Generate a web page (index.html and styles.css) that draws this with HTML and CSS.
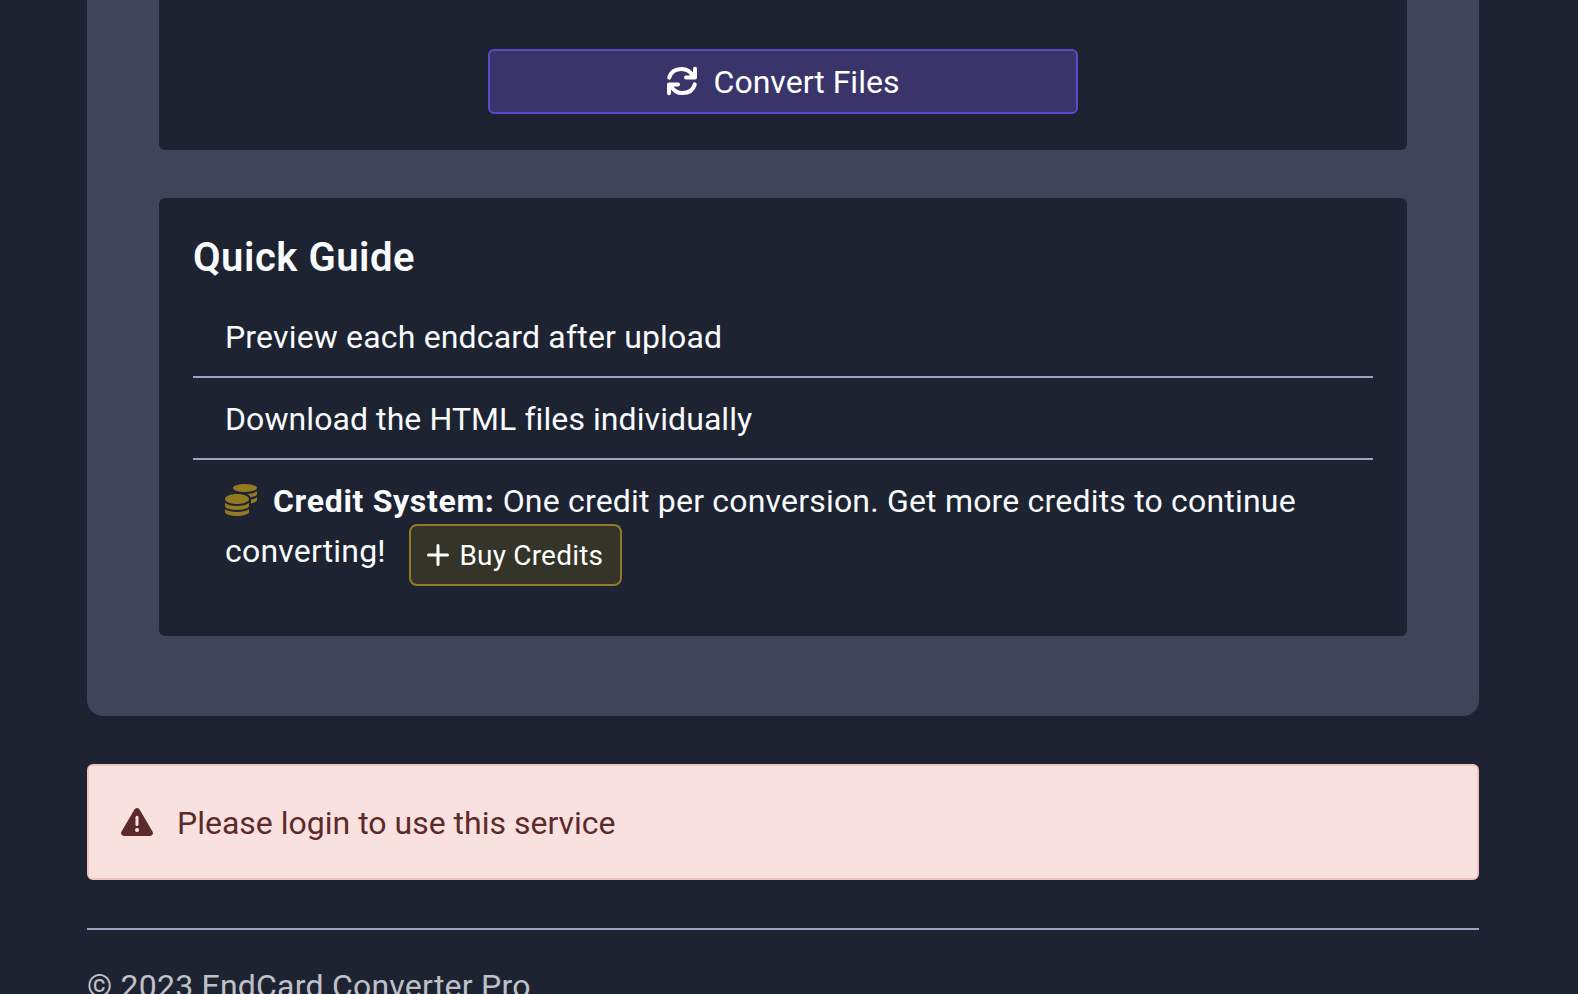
FILE: index.html
```html
<!DOCTYPE html>
<html lang="en">
<head>
<meta charset="utf-8">
<title>EndCard Converter Pro</title>
<link rel="stylesheet" href="styles.css">
</head>
<body>
<main class="page">
  <section class="panel">
    <div class="card card-convert">
      <button class="btn-convert"><svg class="icon-sync" viewBox="0 0 32 32" fill="none" stroke="currentColor" stroke-width="4" stroke-linecap="round" stroke-linejoin="round"><path d="M3.2 12.600C4.800 7 9.400 3.900 15.600 3.900c5 0 9 2.600 11.600 7.400M29 3.700v8.700h-9"/><path d="M28.800 19.400C27.200 25 22.600 28.100 16.400 28.100c-5 0-9-2.600-11.600-7.400M3 28.300v-8.700h9"/></svg><span>Convert Files</span></button>
    </div>
    <div class="card card-guide">
      <h2 class="guide-title">Quick Guide</h2>
      <ul class="guide-list">
        <li class="guide-item">Preview each endcard after upload</li>
        <li class="guide-item guide-download">Download the HTML files individually</li>
        <li class="guide-item guide-credit"><svg class="icon-coins" viewBox="0 0 512 512" fill="currentColor"><path d="M0 405.300V448c0 35.300 86 64 192 64s192-28.700 192-64v-42.700C342.700 434.400 267.200 448 192 448S41.300 434.400 0 405.300zM320 128c106 0 192-28.700 192-64S426 0 320 0 128 28.700 128 64s86 64 192 64zM0 300.400V352c0 35.300 86 64 192 64s192-28.700 192-64v-51.600c-41.300 34-116.900 51.600-192 51.600S41.300 334.400 0 300.400zm416 11c57.300-11.100 96-31.700 96-55.400v-42.700c-23.200 16.400-57.300 27.600-96 34.500v63.600zM192 160C86 160 0 195.800 0 240s86 80 192 80 192-35.800 192-80-86-80-192-80zm219.300 56.300c60-10.800 100.700-32 100.700-56.300v-42.700c-35.500 25.100-96.500 38.600-160.700 41.800 29.500 14.300 51.200 33.500 60 57.200z"/></svg><strong class="credit-label">Credit System:</strong> One credit per conversion. Get more credits to continue converting!<a class="btn-buy"><svg class="icon-plus" viewBox="0 0 22 22" fill="none" stroke="currentColor" stroke-width="3" stroke-linecap="round"><path d="M11 1.500v19M1.500 11h19"/></svg><span>Buy Credits</span></a></li>
      </ul>
    </div>
  </section>
  <div class="alert"><svg class="icon-warn" viewBox="0 0 32 28"><path fill="currentColor" d="M13.400 1.500a3 3 0 0 1 5.200 0l13 22.200A2.900 2.900 0 0 1 29 28H3A2.900 2.900 0 0 1 .4 23.700z"/><path d="M16 9.300v7.200" stroke="#f9e1e0" stroke-width="3" stroke-linecap="round"/><circle cx="16" cy="22" r="2" fill="#f9e1e0"/></svg><span>Please login to use this service</span></div>
  <footer class="footer">© 2023 EndCard Converter Pro</footer>
</main>
</body>
</html>
```
FILE: styles.css
```css
* { box-sizing: border-box; }
html, body { margin: 0; height: 994px; overflow: hidden; }
body { background: #1e2332; color: #f8fafc; font-family: Roboto, sans-serif; font-size: 32px; line-height: 48px; }
.page { display: flex; flex-direction: column; padding: 0 99px 0 87px; }
.panel { height: 716px; padding: 0 72px 80px; background: #40445a; border-radius: 0 0 16px 16px; display: flex; flex-direction: column; gap: 48px; }
.card { background: #1e2332; border-radius: 6px; }
.card-convert { height: 150px; border-radius: 0 0 6px 6px; padding-top: 49px; display: flex; justify-content: center; align-items: flex-start; }
.btn-convert { width: 590px; height: 65px; padding: 0 1px 1px 0; display: flex; align-items: center; justify-content: center; gap: 16px; background: #39356b; border: 2px solid #5b4bc8; border-radius: 6px; color: #fff; font: inherit; box-shadow: 0 6px 14px rgba(0,0,0,.08); }
.btn-convert span { padding-top: 1px; }
.icon-sync { width: 32px; height: 32px; }
.card-guide { height: 438px; padding: 36px 34px 32px; }
.guide-title { margin: 0 0 14px; font-size: 40px; font-weight: 600; line-height: 48px; letter-spacing: .53px; }
.guide-list { list-style: none; margin: 0; padding: 0; }
.guide-item { padding: 17px 32px 15px; border-bottom: 2px solid #9ca3bf; letter-spacing: .17px; }
.guide-download { letter-spacing: .08px; }
.guide-credit { border: 0; letter-spacing: .19px; }
.credit-label { letter-spacing: .68px; }
.icon-coins { width: 32px; height: 32px; margin-right: 16px; vertical-align: -4px; color: #927a25; }
.btn-buy { display: inline-flex; align-items: center; justify-content: center; width: 213px; height: 62px; margin: -1px 0 0 23px; padding-top: 1px; gap: 10px; font-size: 28px; line-height: 42px; border: 2px solid #927a25; border-radius: 8px; background: #353429; color: #fff; vertical-align: -4px; }
.icon-plus { width: 22px; height: 22px; margin-bottom: 1px; }
.alert { margin-top: 48px; height: 116px; padding: 1px 32px 0; display: flex; align-items: center; gap: 24px; background: #f9e1e0; border: 2px solid #f5c2c2; border-radius: 6px; color: #5c2a2a; }
.icon-warn { width: 32px; height: 28px; margin-bottom: 2px; }
.footer { margin-top: 48px; border-top: 2px solid #9ca3bf; padding-top: 32px; color: #bec1c8; letter-spacing: .22px; }
```
